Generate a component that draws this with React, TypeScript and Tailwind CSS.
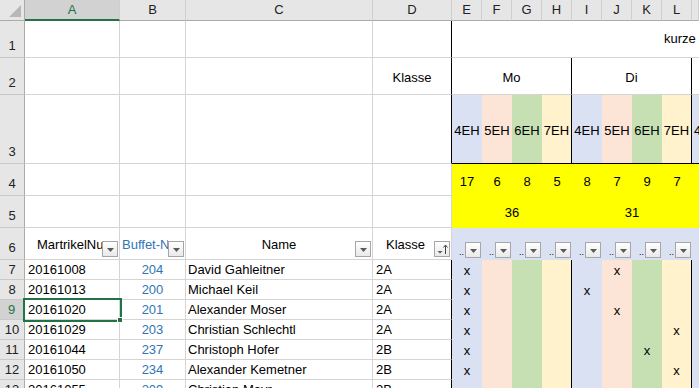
import React from "react";

const cols = ["A", "B", "C", "D", "E", "F", "G", "H", "I", "J", "K", "L", ""];
const fills = ["bg-[#d9e1f2]", "bg-[#fce4d6]", "bg-[#c6e0b4]", "bg-[#fff2cc]"];
const hours = ["4EH", "5EH", "6EH", "7EH"];
const counts = ["17", "6", "8", "5", "8", "7", "9", "7"];

const rows = [
  { n: 7, id: "20161008", nr: "204", name: "David Gahleitner", k: "2A", x: [0, 5] },
  { n: 8, id: "20161013", nr: "200", name: "Michael Keil", k: "2A", x: [0, 4] },
  { n: 9, id: "20161020", nr: "201", name: "Alexander Moser", k: "2A", x: [0, 5] },
  { n: 10, id: "20161029", nr: "203", name: "Christian Schlechtl", k: "2A", x: [0, 7] },
  { n: 11, id: "20161044", nr: "237", name: "Christoph Hofer", k: "2B", x: [0, 6] },
  { n: 12, id: "20161050", nr: "234", name: "Alexander Kemetner", k: "2B", x: [0, 7] },
  { n: 13, id: "20161055", nr: "209", name: "Christian Mayr", k: "2B", x: [0] },
];

const grid = "border-r border-b border-[#d4d4d4]";

function Filter() {
  return (
    <div className="flex h-[16px] w-[16px] shrink-0 items-center justify-center self-end mb-[2px] mr-px border border-[#a6a6a6] bg-linear-to-b from-white to-[#e9e9e9]">
      <svg width="7" height="4" viewBox="0 0 7 4" className="mt-px">
        <path d="M0 0h7L3.5 4z" fill="#5a5a5a" />
      </svg>
    </div>
  );
}

function SortFilter() {
  return (
    <div className="flex h-[16px] w-[16px] shrink-0 items-center justify-center self-end mb-[2px] mr-px border border-[#a6a6a6] bg-linear-to-b from-white to-[#e9e9e9]">
      <svg width="14" height="14" viewBox="0 0 14 14">
        <path d="M2.5 9h5L5 11.5z" fill="#5a5a5a" />
        <path d="M10.5 12V3.5" stroke="#444" strokeWidth="1" />
        <path d="M8.5 5.5l2-2.5 2 2.5" stroke="#444" strokeWidth="1" fill="none" />
      </svg>
    </div>
  );
}

function RowHead({ n, tall, sel }: { n: number; tall?: boolean; sel?: boolean }) {
  return (
    <div
      className={`flex justify-center border-b border-b-[#c9c9c9] text-[13px] ${
        tall ? "items-end pb-[2px]" : "items-center"
      } ${
        sel
          ? "bg-[#d2d2d2] text-[#217346] border-r-2 border-r-[#217346]"
          : "bg-[#e6e6e6] text-[#222] border-r border-r-[#ababab]"
      }`}
    >
      {n}
    </div>
  );
}

export default function App() {
  return (
    <div className="h-[388px] w-[699px] overflow-hidden bg-white font-['Liberation_Sans',Arial,sans-serif] text-[13px] text-black">
      <div className="relative grid grid-cols-[25px_95px_66px_187px_79px_30px_30px_30px_30px_30px_30px_30px_30px_7px] grid-rows-[21px_37px_37px_69px_32px_32px_32px_20px_20px_20px_20px_20px_20px_20px]">
        {/* column headers */}
        <div className="flex items-end justify-end bg-[#e6e6e6] border-r border-r-[#ababab] border-b border-b-[#ababab] pr-[3px] pb-[3px]">
          <svg width="12" height="12" viewBox="0 0 12 12">
            <path d="M12 0V12H0z" fill="#b7b7b7" />
          </svg>
        </div>
        {cols.map((c, i) => (
          <div
            key={i}
            className={`flex items-center justify-center overflow-hidden border-r border-r-[#cfcfcf] text-[13px] ${
              c === "A"
                ? "bg-[#d2d2d2] text-[#217346] border-b-2 border-b-[#217346]"
                : "bg-[#e6e6e6] text-[#222] border-b border-b-[#ababab]"
            }`}
          >
            {c}
          </div>
        ))}

        {/* row 1 */}
        <RowHead n={1} tall />
        <div className={grid} />
        <div className={grid} />
        <div className={grid} />
        <div className={`${grid} border-r-black`} />
        <div className="col-span-9 flex items-center overflow-hidden whitespace-nowrap border-b border-[#d4d4d4] pl-[212px]">
          kurze Stunden
        </div>

        {/* row 2 */}
        <RowHead n={2} tall />
        <div className={grid} />
        <div className={grid} />
        <div className={grid} />
        <div className={`${grid} border-r-black flex items-center justify-center pt-[3px]`}>Klasse</div>
        <div className="col-span-4 flex items-center justify-center pt-[3px] border-r border-r-black border-b border-b-[#d4d4d4]">Mo</div>
        <div className="col-span-4 flex items-center justify-center pt-[3px] border-r border-r-black border-b border-b-[#d4d4d4]">Di</div>
        <div className="border-b border-[#d4d4d4]" />

        {/* row 3 */}
        <RowHead n={3} tall />
        <div className={grid} />
        <div className={grid} />
        <div className={grid} />
        <div className={`${grid} border-r-black`} />
        {counts.map((_, i) => (
          <div
            key={i}
            className={`flex items-center justify-center whitespace-nowrap pt-[3px] border-b border-b-black ${fills[i % 4]} ${
              i % 4 === 3 ? "border-r border-r-black" : ""
            }`}
          >
            {hours[i % 4]}
          </div>
        ))}
        <div className="flex items-center overflow-hidden whitespace-nowrap pt-[3px] border-b border-b-black bg-[#d9e1f2] pl-[2px]">4EH</div>

        {/* row 4 */}
        <RowHead n={4} tall />
        <div className={grid} />
        <div className={grid} />
        <div className={grid} />
        <div className={grid} />
        {counts.map((c, i) => (
          <div key={i} className="flex items-center justify-center bg-[#ffff00] pt-[3px]">
            {c}
          </div>
        ))}
        <div className="bg-[#ffff00]" />

        {/* row 5 */}
        <RowHead n={5} tall />
        <div className={grid} />
        <div className={grid} />
        <div className={grid} />
        <div className={grid} />
        <div className="col-span-4 flex items-center justify-center bg-[#ffff00] pt-[2px]">36</div>
        <div className="col-span-4 flex items-center justify-center bg-[#ffff00] pt-[2px]">31</div>
        <div className="bg-[#ffff00]" />

        {/* row 6: table header */}
        <RowHead n={6} tall />
        <div className={`${grid} flex`}>
          <span className="min-w-0 flex-1 self-end overflow-hidden whitespace-nowrap pb-[5px] pl-[12px]">MartrikelNummer</span>
          <Filter />
        </div>
        <div className={`${grid} flex`}>
          <span className="min-w-0 flex-1 self-end overflow-hidden whitespace-nowrap pb-[5px] pl-[2px] text-[#2f75b5]">Buffet-Nr</span>
          <Filter />
        </div>
        <div className={`${grid} flex`}>
          <span className="flex-1 self-end pb-[5px] pl-[17px] text-center">Name</span>
          <Filter />
        </div>
        <div className={`${grid} flex`}>
          <span className="flex-1 self-end pb-[5px] pl-[4px] text-center">Klasse</span>
          <SortFilter />
        </div>
        {counts.map((_, i) => (
          <div key={i} className="flex items-end justify-end bg-[#d9e1f2]">
            <span className="mb-[3px] mr-[1px] text-[9px] leading-none">..</span>
            <Filter />
          </div>
        ))}
        <div className="bg-[#d9e1f2]" />

        {/* data rows */}
        {rows.map((r) => (
          <React.Fragment key={r.n}>
            <RowHead n={r.n} sel={r.n === 9} />
            <div className={`${grid} flex items-center pl-[3px]`}>{r.id}</div>
            <div className={`${grid} flex items-center justify-center text-[#2f75b5]`}>{r.nr}</div>
            <div className={`${grid} flex items-center whitespace-nowrap pl-[2px]`}>{r.name}</div>
            <div className={`${grid} border-r-black flex items-center pl-[3px]`}>{r.k}</div>
            {counts.map((_, i) => (
              <div
                key={i}
                className={`flex items-center justify-center pt-px ${fills[i % 4]} ${
                  i % 4 === 3 ? "border-r border-r-black" : ""
                }`}
              >
                {r.x.includes(i) ? "x" : ""}
              </div>
            ))}
            <div className="bg-[#d9e1f2]" />
          </React.Fragment>
        ))}

        {/* active cell A9 */}
        <div className="absolute left-[23px] top-[298px] h-[24px] w-[99px] border-2 border-[#217346]" />
        <div className="absolute left-[117px] top-[317px] h-[6px] w-[6px] border border-white bg-[#217346]" />
      </div>
    </div>
  );
}
